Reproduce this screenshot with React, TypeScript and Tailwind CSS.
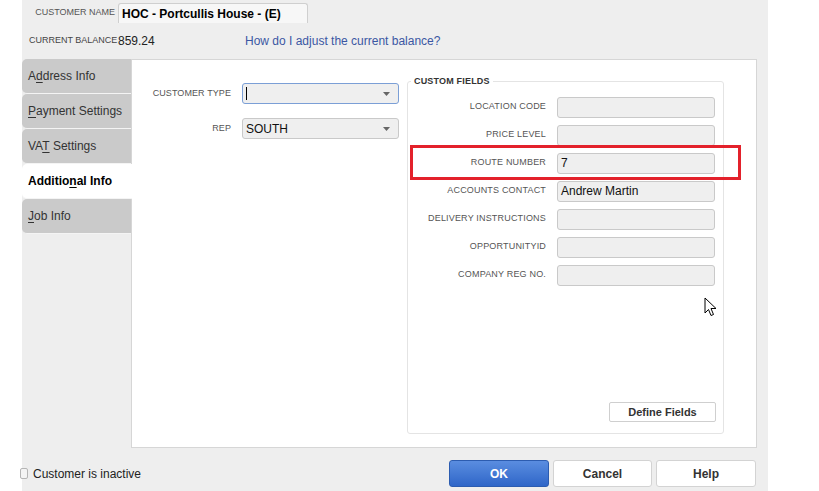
import React from 'react';

const font = { fontFamily: '"Liberation Sans", Arial, sans-serif' };

const tabs = [
  { pre: 'A', key: 'd', post: 'dress Info' },
  { pre: '', key: 'P', post: 'ayment Settings' },
  { pre: 'VA', key: 'T', post: '\u00a0Settings' },
  { pre: 'Additio', key: 'n', post: 'al Info', active: true },
  { pre: '', key: 'J', post: 'ob Info' },
];

const customFields = [
  { label: 'LOCATION CODE', value: '' },
  { label: 'PRICE LEVEL', value: '' },
  { label: 'ROUTE NUMBER', value: '7' },
  { label: 'ACCOUNTS CONTACT', value: 'Andrew Martin' },
  { label: 'DELIVERY INSTRUCTIONS', value: '' },
  { label: 'OPPORTUNITYID', value: '' },
  { label: 'COMPANY REG NO.', value: '' },
];

function Caret() {
  return (
    <svg width="7" height="4" viewBox="0 0 7 4" className="shrink-0">
      <path d="M0 0 H7 L3.5 4 Z" fill="#666" />
    </svg>
  );
}

function Select({ value, focused }: { value?: string; focused?: boolean }) {
  return (
    <div
      className={`flex items-center justify-between w-[157px] h-[21px] pl-[3px] pr-[8px] rounded-[3px] bg-[#efefef] text-[12px] text-[#111] border ${
        focused ? 'border-[#7b9fd6]' : 'border-[#c9c9c9]'
      }`}
    >
      {focused ? <span className="w-px h-[13px] bg-black" /> : <span>{value}</span>}
      <Caret />
    </div>
  );
}

export default function App() {
  return (
    <div className="relative w-[819px] h-[491px] bg-white flex overflow-hidden" style={font}>
      <div className="w-[22px] shrink-0" />

      {/* dialog */}
      <div className="w-[746px] shrink-0 bg-[#eeeeee] flex flex-col">
        {/* Customer name */}
        <div className="flex h-[23px] pt-[3px]">
          <div className="w-[96px] pr-[3px] flex items-center justify-end whitespace-nowrap text-[9px] text-[#555]">
            CUSTOMER NAME
          </div>
          <div className="w-[190px] h-[20px] border border-b-0 border-[#cfcfcf] rounded-t-[3px] bg-[#f7f7f7] px-[3px] flex items-center text-[12px] font-bold text-black">
            HOC - Portcullis House - (E)
          </div>
        </div>

        {/* Balance */}
        <div className="flex items-center h-[36px]">
          <div className="w-[96px] pl-[7px] whitespace-nowrap text-[9px] text-[#444]">CURRENT BALANCE</div>
          <div className="w-[127px] text-[12px] text-[#222]">859.24</div>
          <a className="text-[12px] text-[#3b57a3]">How do I adjust the current balance?</a>
        </div>

        {/* Body */}
        <div className="flex h-[389px]">
          <div className="w-[110px] shrink-0 flex flex-col">
            {tabs.map((t) => (
              <div
                key={t.post}
                className={`h-[35px] border-b border-[#f4f4f4] rounded-l-[5px] pl-[6px] flex items-center text-[12px] ${
                  t.active ? 'relative z-10 bg-white font-bold text-black' : 'bg-[#cacaca] text-[#333]'
                }`}
              >
                <span>
                  {t.pre}
                  <span className="underline underline-offset-2">{t.key}</span>
                  {t.post}
                </span>
              </div>
            ))}
          </div>

          <div className="-ml-px w-[626px] bg-white border border-[#d6d6d6] flex">
            {/* Left fields */}
            <div className="w-[275px] pt-[23px] flex flex-col gap-[14px]">
              <div className="flex items-center">
                <div className="w-[99px] text-right text-[9px] tracking-[0.01em] text-[#555]">CUSTOMER TYPE</div>
                <div className="ml-[11px]">
                  <Select focused />
                </div>
              </div>
              <div className="flex items-center">
                <div className="w-[99px] text-right text-[9px] tracking-[0.01em] text-[#555]">REP</div>
                <div className="ml-[11px]">
                  <Select value="SOUTH" />
                </div>
              </div>
            </div>

            {/* Custom fields */}
            <fieldset className="mt-[15px] w-[317px] h-[359px] border border-[#e4e4e4] rounded-[3px] flex flex-col">
              <legend className="ml-[3px] px-[3px] text-[9px] font-bold tracking-[0.02em] text-[#333]">
                CUSTOM FIELDS
              </legend>
              <div className="pt-[8px] flex flex-col gap-[7px]">
                {customFields.map((f) => (
                  <div key={f.label} className="flex items-center">
                    <div className="w-[138px] text-right text-[9px] tracking-[0.02em] text-[#555]">{f.label}</div>
                    <div className="ml-[11px] w-[158px] h-[21px] rounded-[3px] border border-[#c9c9c9] bg-[#efefef] px-[3px] flex items-center text-[12px] text-[#111]">
                      {f.value}
                    </div>
                  </div>
                ))}
              </div>
              <div className="mt-auto flex justify-end pr-[7px] pb-[11px]">
                <button className="w-[107px] h-[20px] border border-[#cfcfcf] rounded-[2px] bg-white text-[11px] font-bold text-[#333]">
                  Define Fields
                </button>
              </div>
            </fieldset>
          </div>
        </div>

        {/* Footer */}
        <div className="flex items-start flex-1 pr-[12px] pt-[12px]">
          <div className="flex items-center h-[27px]">
            <div className="-ml-[2px] w-[8px] h-[11px] border border-[#b5b5b5] rounded-[2px] bg-[#f4f4f4]" />
            <span className="ml-[5px] text-[12px] text-[#222]">Customer is inactive</span>
          </div>
          <div className="ml-auto flex gap-[4px]">
            <button className="w-[100px] h-[27px] rounded-[3px] border border-[#2c5cb0] bg-gradient-to-b from-[#5a8de0] to-[#2f66c8] text-[12px] font-bold text-white">
              OK
            </button>
            <button className="w-[99px] h-[27px] rounded-[3px] border border-[#d3d3d3] bg-white text-[12px] font-bold text-[#333]">
              Cancel
            </button>
            <button className="w-[100px] h-[27px] rounded-[3px] border border-[#d3d3d3] bg-white text-[12px] font-bold text-[#333]">
              Help
            </button>
          </div>
        </div>
      </div>

      {/* highlight annotation */}
      <div className="absolute left-[410px] top-[145px] w-[331px] h-[35px] border-[3px] border-[#e3212b]" />

      {/* mouse cursor */}
      <svg className="absolute left-[704px] top-[297px]" width="13" height="21" viewBox="0 0 13 21">
        <path
          d="M1 1 L1 16 L4.5 12.5 L7 18.5 L9.5 17.5 L7 11.5 L12 11.5 Z"
          fill="white"
          stroke="black"
          strokeWidth="1"
          strokeLinejoin="miter"
        />
      </svg>
    </div>
  );
}
